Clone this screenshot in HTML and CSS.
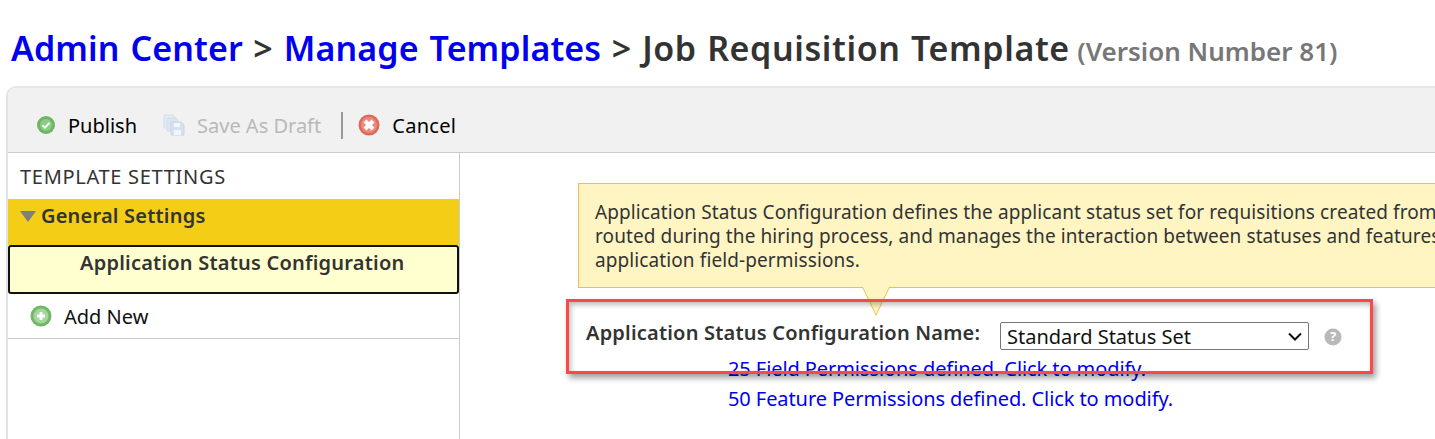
FILE: index.html
```html
<!DOCTYPE html>
<html lang="en">
<head>
<meta charset="utf-8">
<title>Job Requisition Template</title>
<link rel="stylesheet" href="styles.css">
</head>
<body>
<h1 class="title"><a href="#">Admin Center</a> &gt; <a href="#">Manage Templates</a> &gt; Job Requisition Template <span class="version">(Version Number 81)</span></h1>
<div class="panel">
  <div class="toolbar">
    <span class="tool">
      <svg class="ico" width="18" height="18" viewBox="0 0 18 18"><circle cx="9" cy="9" r="9" fill="#6db665"/><circle cx="9" cy="9" r="6" fill="#8ccb83"/><path d="M5.5 9.2l2.4 2.4 4.6-4.8" fill="none" stroke="#fff" stroke-width="2"/></svg>
      <span>Publish</span>
    </span>
    <span class="tool disabled">
      <svg class="ico" width="22" height="22" viewBox="0 0 22 22"><path d="M1 1h9l2 2v3H5v8H1z" fill="#e3eaf3" stroke="#d3dfec"/><path d="M4 4h9l2 2v3H8v8H4z" fill="#dbe5f0" stroke="#d3dfec"/><path d="M8 8h10l3 3v10H8z" fill="#d5e1ee" stroke="#c8d7e8"/><rect x="11" y="9" width="6" height="4" fill="#f4f7fa"/><rect x="11" y="16" width="7" height="5" fill="#f4f7fa"/></svg>
      <span>Save As Draft</span>
    </span>
    <span class="divider"></span>
    <span class="tool cancel">
      <svg class="ico" width="22" height="22" viewBox="0 0 22 22"><circle cx="11" cy="11" r="10.5" fill="#dc6a5a"/><circle cx="11" cy="11" r="8" fill="#ec8a7c"/><path d="M7 7l8 8M15 7l-8 8" stroke="#fff" stroke-width="4" fill="none"/></svg>
      <span>Cancel</span>
    </span>
  </div>
  <div class="content">
    <aside class="sidebar">
      <div class="side-head">TEMPLATE SETTINGS</div>
      <div class="group"><span class="caret"></span>General Settings</div>
      <div class="selected">Application Status Configuration</div>
      <div class="add">
        <svg class="ico" width="22" height="22" viewBox="0 0 22 22"><circle cx="11" cy="11" r="10.5" fill="#72b868"/><circle cx="11" cy="11" r="7.5" fill="#a5d79c"/><path d="M11 7v8M7 11h8" stroke="#fff" stroke-width="3" fill="none"/></svg>
        <span>Add New</span>
      </div>
    </aside>
    <main class="main">
      <div class="callout">Application Status Configuration defines the applicant status set for requisitions created from<br>routed during the hiring process, and manages the interaction between statuses and features<br>application field-permissions.<span class="tip"></span></div>
      <div class="name-row">
        <label class="name-label" for="status-set">Application Status Configuration Name:</label>
        <select class="name-select" id="status-set"><option>Standard Status Set</option></select>
        <svg class="help" width="18" height="18" viewBox="0 0 18 18"><circle cx="9" cy="9" r="8.5" fill="#b9b9b9"/><text x="9" y="13" text-anchor="middle" class="help-q">?</text></svg>
      </div>
      <div class="links">
        <a href="#">25 Field Permissions defined. Click to modify.</a>
        <a href="#">50 Feature Permissions defined. Click to modify.</a>
      </div>
      <div class="highlight"></div>
    </main>
  </div>
</div>
</body>
</html>
```
FILE: styles.css
```css
* { box-sizing: border-box; }
html, body { margin: 0; height: 439px; overflow: hidden; background: #fff; }
body { font-family: "Noto Sans", "Open Sans", sans-serif; color: #333; width: 1435px; }
a { color: #0000ee; text-decoration: none; }
.title { margin: 0; padding: 26px 0 0 11px; height: 86px; font-size: 34px; line-height: 44px; font-weight: 600; white-space: nowrap; color: #333; letter-spacing: 0.6px; word-spacing: 1px; }
.title a { letter-spacing: 0.1px; word-spacing: 2px; }
.version { font-size: 26px; color: #777; letter-spacing: 0; word-spacing: 0; margin-left: -3px; }
.panel { margin-left: 6px; height: 353px; border-left: 2px solid #e2e2e2; border-top: 2px solid #e6e6e6; border-top-left-radius: 10px; }
.toolbar { height: 65px; background: #f1f1f1; border-bottom: 1px solid #ccc; display: flex; align-items: center; padding: 10px 0 0 29px; font-size: 20px; color: #000; border-top-left-radius: 8px; }
.tool { display: flex; align-items: center; margin-right: 16px; white-space: nowrap; }
.tool .ico { margin-right: 13px; }
.tool.disabled { color: #b9b9b9; margin-right: 20px; margin-left: 10px; }
.tool.disabled .ico { margin-right: 12px; }
.tool.cancel { margin-left: -1px; letter-spacing: 0.3px; }
.tool.cancel .ico { margin-right: 12px; }
.divider { width: 2px; height: 27px; background: #999; margin-right: 16px; }
.content { display: flex; height: 286px; }
.sidebar { width: 452px; border-right: 1px solid #ccc; flex: none; }
.side-head { height: 45px; padding: 11px 0 0 12px; font-size: 20px; line-height: 26px; color: #333; letter-spacing: 0.7px; }
.group { height: 46px; margin-top: 1px; background: #f4cd17; font-size: 20px; font-weight: 600; line-height: 26px; padding: 4px 0 0 12px; display: flex; align-items: flex-start; color: #333; letter-spacing: 0.2px; }
.caret { width: 0; height: 0; margin: 8px 5px 0 0; border-left: 8px solid transparent; border-right: 8px solid transparent; border-top: 11px solid #7f7f7f; }
.selected { height: 49px; background: #ffffcf; border: 2px solid #111; border-radius: 3px; font-size: 20px; font-weight: 600; line-height: 26px; padding: 3px 0 0 70px; color: #333; letter-spacing: 0.22px; }
.add { height: 45px; border-bottom: 1px solid #ccc; display: flex; align-items: center; padding: 0 0 0 22px; font-size: 20px; color: #111; }
.add .ico { margin-right: 12px; }
.main { position: relative; flex: 1; min-width: 0; padding: 30px 0 0 118px; }
.callout { position: relative; width: 1000px; height: 105px; background: #fef5c3; border: 1px solid #efc04a; border-width: 1px 0 1px 1px; padding: 16px 0 0 16px; font-size: 19px; line-height: 24px; white-space: nowrap; color: #333; letter-spacing: 0.1px; }
.tip { position: absolute; left: 283px; top: 103px; width: 28px; height: 29px; background: #efc04a; clip-path: polygon(0 0, 100% 0, 50% 100%); }
.tip::after { content: ""; position: absolute; left: 1px; top: 0; width: 26px; height: 27px; background: #fef5c3; clip-path: polygon(0 0, 100% 0, 50% 100%); }
.name-row { display: flex; align-items: flex-start; padding: 29px 0 0 8px; height: 66px; }
.name-label { font-size: 20px; font-weight: 600; line-height: 32px; color: #333; width: 414px; flex: none; white-space: nowrap; letter-spacing: 0.2px; }
.name-select { appearance: none; width: 309px; height: 28px; margin-top: 5px; font-family: "Noto Sans", sans-serif; font-size: 20px; color: #111; border: 1px solid #767676; border-radius: 2px; padding: 0 0 0 6px; background: #fff url("data:image/svg+xml,%3Csvg xmlns='http://www.w3.org/2000/svg' width='14' height='9' viewBox='0 0 14 9'%3E%3Cpath d='M1 1.5l6 6 6-6' fill='none' stroke='%23111' stroke-width='2'/%3E%3C/svg%3E") no-repeat right 6px center; }
.help { margin: 11px 0 0 15px; }
.help-q { font-size: 13px; font-weight: 700; fill: #fff; font-family: "Noto Sans", sans-serif; }
.links { display: flex; flex-direction: column; padding-left: 150px; font-size: 20px; line-height: 30px; letter-spacing: -0.08px; }
.links a { white-space: nowrap; }
.highlight { position: absolute; left: 106px; top: 146px; width: 807px; height: 75px; border: 3px solid #ff4747; box-shadow: 3px 4px 6px rgba(0, 0, 0, .38), inset 2px 3px 5px rgba(0, 0, 0, .25); pointer-events: none; }
```
